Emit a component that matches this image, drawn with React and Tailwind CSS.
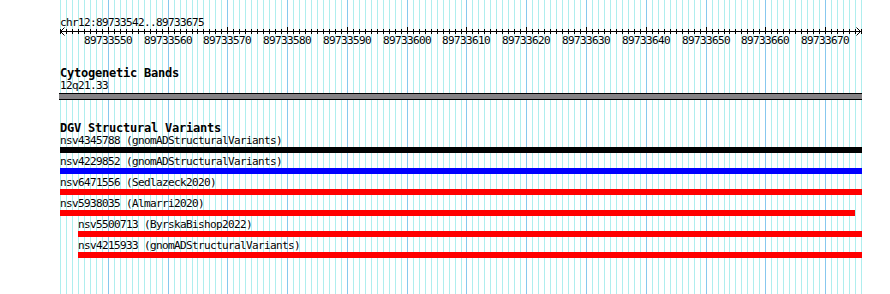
import React from "react";

const START = 89733542;
const NBASES = 134;
const SPAN = 801;
const BP = SPAN / NBASES;
const px = (i) => Math.round(i * BP);

const variants = [
  { id: "nsv4345788", src: "gnomADStructuralVariants", color: "bg-black", left: 0, width: 802 },
  { id: "nsv4229852", src: "gnomADStructuralVariants", color: "bg-[#0000ff]", left: 0, width: 802 },
  { id: "nsv6471556", src: "Sedlazeck2020", color: "bg-[#ff0000]", left: 0, width: 802 },
  { id: "nsv5938035", src: "Almarri2020", color: "bg-[#ff0000]", left: 0, width: 795 },
  { id: "nsv5500713", src: "ByrskaBishop2022", color: "bg-[#ff0000]", left: 18, width: 784 },
  { id: "nsv4215933", src: "gnomADStructuralVariants", color: "bg-[#ff0000]", left: 18, width: 784 },
];

function Grid() {
  const lines = [];
  for (let i = 0; i <= NBASES; i++) {
    const major = (START + i) % 10 === 0;
    const x = px(i) + 0.5;
    lines.push(
      <line
        key={i}
        x1={x}
        x2={x}
        y1={0}
        y2={294}
        stroke={major ? "#87c8ee" : "#afeeee"}
        strokeWidth={1}
      />
    );
  }
  return (
    <svg
      className="absolute left-0 top-0"
      width={802}
      height={294}
      shapeRendering="crispEdges"
    >
      {lines}
    </svg>
  );
}

function Ruler() {
  const ticks = [];
  const labels = [];
  for (let i = 0; i <= NBASES; i++) {
    const major = (START + i) % 10 === 0;
    const x = px(i) + 0.5;
    ticks.push(
      <line key={i} x1={x} x2={x} y1={major ? 1 : 3} y2={8} stroke="#000" strokeWidth={1} />
    );
    if (major) {
      labels.push(
        <text
          key={"l" + i}
          x={x - 0.5}
          y={18}
          textAnchor="middle"
          fontFamily="'DejaVu Sans Mono', monospace"
          fontSize={11}
          style={{ letterSpacing: "-0.62px" }}
          fill="#000"
        >
          {START + i}
        </text>
      );
    }
  }
  return (
    <svg width={802} height={21} className="block -mt-[3px] overflow-visible">
      <g shapeRendering="crispEdges">
        <line x1={0} x2={801} y1={5.5} y2={5.5} stroke="#000" strokeWidth={1} />
        {ticks}
      </g>
      <polyline points="4.5,1.5 0.5,5.5 4.5,9.5" fill="none" stroke="#000" strokeWidth={1} />
      <polyline points="796.5,1.5 800.5,5.5 796.5,9.5" fill="none" stroke="#000" strokeWidth={1} />
      {labels}
    </svg>
  );
}

export default function App() {
  return (
    <div className="w-[890px] h-[294px] bg-white overflow-hidden font-['DejaVu_Sans_Mono',monospace] text-black">
      <div className="relative ml-[60px] w-[802px] h-[294px]">
        <Grid />
        <div className="relative flex flex-col pt-[16px]">
          <div className="h-[13px] leading-[13px] text-[11px] tracking-[-0.62px] whitespace-pre">
            chr12:89733542..89733675
          </div>
          <Ruler />
          <div className="mt-[20px] h-[13px] leading-[12px] text-[12px] font-bold tracking-[-0.22px] whitespace-pre">
            Cytogenetic Bands
          </div>
          <div className="h-[13px] leading-[12px] text-[11px] tracking-[-0.62px] whitespace-pre">
            12q21.33
          </div>
          <div className="-ml-[1px] w-[803px] h-[7px] border-y border-black bg-[#858385]" />
          <div className="mt-[22px] h-[13px] leading-[12px] text-[12px] font-bold tracking-[-0.22px] whitespace-pre">
            DGV Structural Variants
          </div>
          <div className="flex flex-col">
            {variants.map((v) => (
              <div key={v.id} className="flex flex-col mb-[3px]" style={{ paddingLeft: v.left }}>
                <div className="h-[12px] leading-[12px] text-[11px] tracking-[-0.62px] whitespace-pre">
                  {v.id} ({v.src})
                </div>
                <div className={"h-[6px] " + v.color} style={{ width: v.width }} />
              </div>
            ))}
          </div>
        </div>
      </div>
    </div>
  );
}
